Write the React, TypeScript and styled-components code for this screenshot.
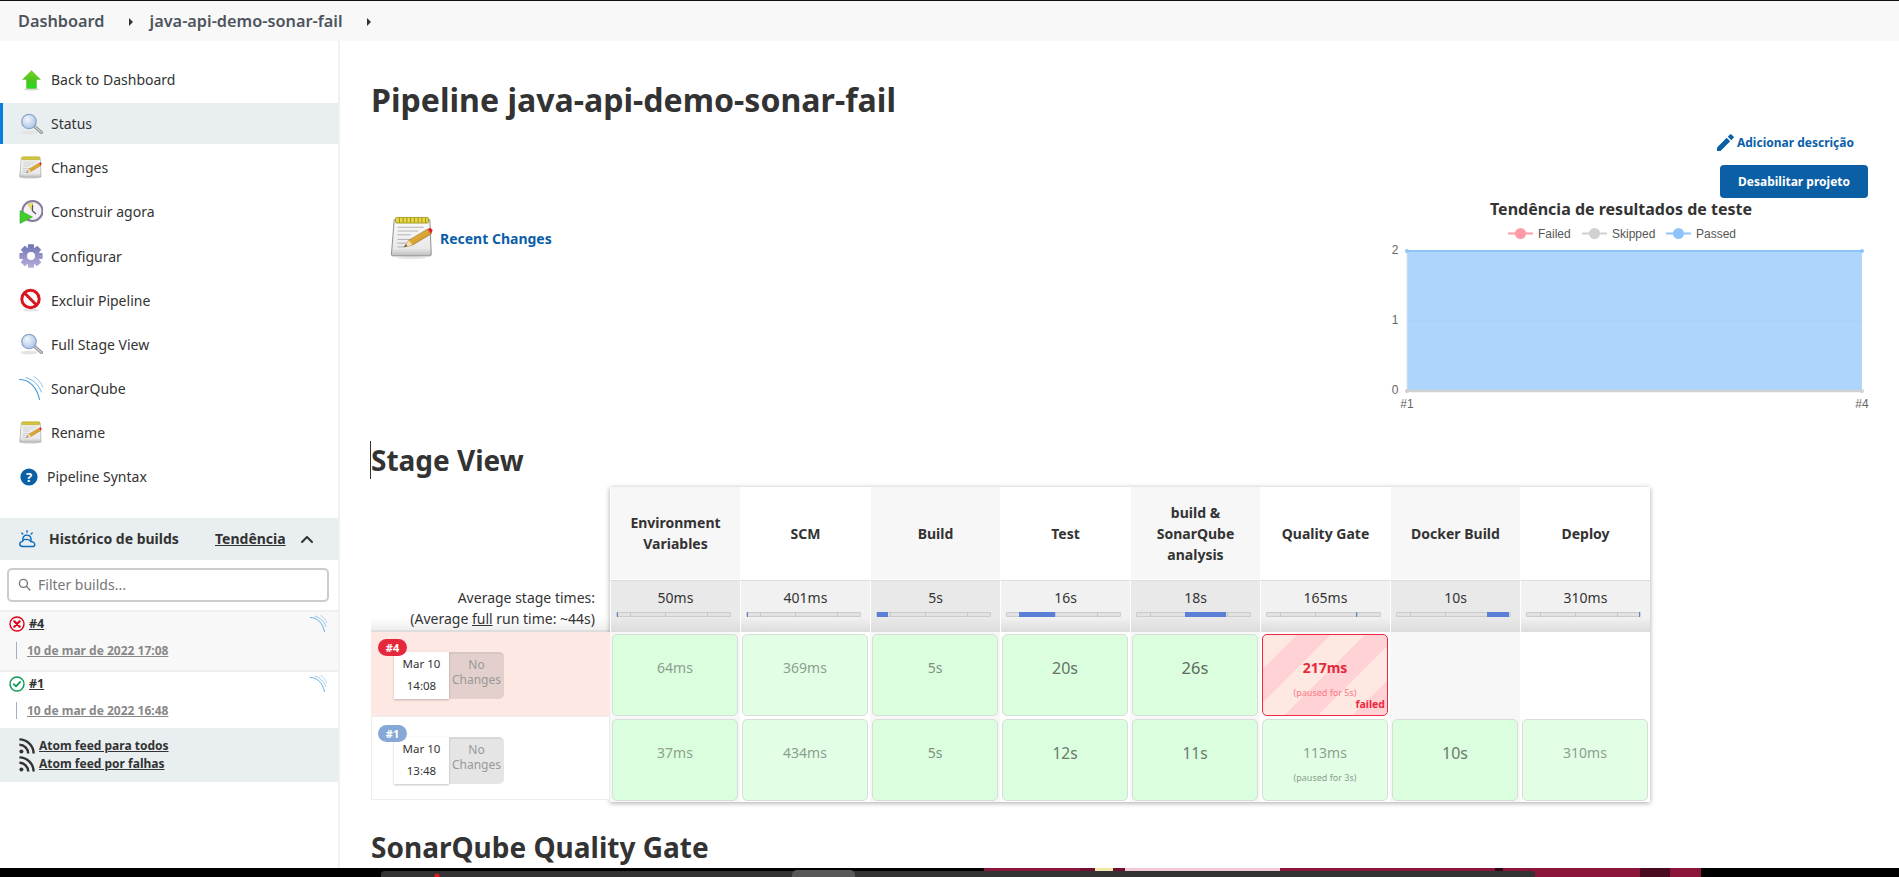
import React from "react";
import styled, { createGlobalStyle } from "styled-components";

const Global = createGlobalStyle`
  html, body { margin: 0; padding: 0; height: 100%; background: #fff; overflow: hidden; }
  body { font-family: "Noto Sans", "Liberation Sans", sans-serif; color: #333; }
  * { box-sizing: border-box; }
`;

const Page = styled.div`
  height: 877px; display: flex; flex-direction: column; overflow: hidden;
`;
const TopBar = styled.nav`
  height: 41px; flex: none; background: #f8f8f8; border-top: 1px solid #111;
  display: flex; align-items: center; padding-left: 18px;
  font-size: 16.3px; font-weight: 600; color: #4d545d; line-height: 20px;
`;
const Crumb = styled.span`white-space: nowrap;`;
const CrumbArrow = styled.span`
  width: 0; height: 0; margin: 1px 0 0 ${p => p.$gap}px;
  margin-right: ${p => p.$after}px;
  border-left: 4px solid #333; border-top: 4px solid transparent; border-bottom: 4px solid transparent;
`;
const Body = styled.div`flex: 1; min-height: 0; display: flex; overflow: hidden;`;
const Sidebar = styled.aside`
  width: 340px; flex: none; border-right: 2px solid #eef2f3; padding-top: 18px;
`;
const Tasks = styled.ul`list-style: none; margin: 0; padding: 0; display: flex; flex-direction: column; gap: 3.15px;`;
const Task = styled.li`
  height: 41px; display: flex; align-items: center; gap: ${p => p.$gap ?? 8}px;
  padding-left: ${p => p.$pad ?? 19}px; font-size: 14px; color: #333; white-space: nowrap;
  background: ${p => (p.$active ? "#e9eef1" : "transparent")};
  box-shadow: ${p => (p.$active ? "inset 3px 0 0 #0b7ddd" : "none")};
`;
const HistoryHead = styled.div`
  margin-top: 20.65px; height: 42px; background: #e9eef1; display: flex; align-items: center;
  padding-left: 19px; font-size: 14px; font-weight: 700; color: #333;
`;
const HistoryTitle = styled.span`margin-left: 13px; width: 166px; white-space: nowrap;`;
const TrendLink = styled.span`text-decoration: underline; white-space: nowrap;`;
const Collapse = styled.span`margin-left: 14px; display: flex;`;
const FilterWrap = styled.div`padding: 8px 9px 8px 7px; height: 50px;`;
const Filter = styled.div`
  height: 34px; border: 2px solid #ccc; border-radius: 5px; background: #fff;
  display: flex; align-items: center; padding-left: 9px; gap: 7px; color: #777; font-size: 14px;
`;
const BuildRow = styled.div`
  height: ${p => p.$h}px; background: ${p => p.$bg}; border-top: 2px solid #eef0f1;
  padding: 2px 11px 0 9px; display: flex; flex-direction: column;
`;
const BuildTop = styled.div`display: flex; align-items: center; gap: 4px; height: 20px;`;
const BuildNo = styled.span`font-size: 12.5px; font-weight: 700; text-decoration: underline; color: #333;`;
const SonarEnd = styled.span`margin-left: auto; display: flex;`;
const BuildDate = styled.div`
  margin: 8px 0 0 7px; padding-left: 10px; height: 17px; border-left: 1px solid #9fb0c0;
  font-size: 12px; line-height: 17px; font-weight: 700; color: #888; text-decoration: underline; white-space: nowrap;
`;
const Feeds = styled.div`
  height: 54px; background: #e9eef1; padding: 10px 0 0 19px; display: flex; flex-direction: column; gap: 2px;
`;
const Feed = styled.div`
  display: flex; align-items: center; gap: 4px; height: 16px; font-size: 12px; font-weight: 700;
  text-decoration: underline; color: #333; white-space: nowrap;
`;
const Main = styled.main`flex: 1; min-width: 0; padding: 37px 31px 0 31px; display: flex; flex-direction: column;`;
const Title = styled.h1`margin: 0; font-size: 32.1px; line-height: 44px; font-weight: 700; color: #333; white-space: nowrap;`;
const DescRow = styled.div`
  margin-top: 10px; height: 20px; padding-right: 14px; display: flex; justify-content: flex-end; align-items: center; gap: 3px;
  font-size: 12px; font-weight: 700; color: #0b5ea8;
`;
const ButtonRow = styled.div`margin-top: 13px; display: flex; justify-content: flex-end;`;
const Disable = styled.button`
  width: 148px; height: 33px; border: 0; border-radius: 4px; background: #0b5fa5; color: #fff;
  font: 700 12px "Noto Sans", sans-serif; padding: 0;
`;
const Overview = styled.section`margin-top: 2px; height: 220px; display: flex; justify-content: space-between;`;
const Recent = styled.div`
  margin: 14px 0 0 19px; height: 48px; display: flex; align-items: center; gap: 5px;
  font-size: 14px; font-weight: 700; color: #0b5ea8;
`;
const Heading = styled.h2`
  margin: 21px 0 0; font-size: 28px; line-height: 38px; font-weight: 700; color: #333; white-space: nowrap;
  span { display: inline-block; box-shadow: ${p => (p.$caret ? "-1px 0 0 0 #333" : "none")}; margin-left: 0; }
`;
const NextHeading = styled(Heading)`margin-top: 26px; flex: none;`;
const Stage = styled.section`margin-top: 8px; display: flex; flex: none;`;
const StageLeft = styled.div`width: 239px; flex: none; display: flex; flex-direction: column;`;
const LeftSpacer = styled.div`height: 93px;`;
const AvgLabel = styled.div`
  height: 52px; padding: 7px 15px 0 0; text-align: right; font-size: 14px; line-height: 21px; color: #333;
  background: linear-gradient(to bottom, #fff 0, #fff 75%, #eee 100%); border-bottom: 2px solid #ddd; white-space: nowrap;
  u { text-decoration: underline; }
`;
const RunRow = styled.div`
  position: relative; padding: 20px 0 0 ${p => (p.$failed ? 23 : 22)}px; display: flex;
  background: ${p => (p.$failed ? "#fde8e4" : "#fff")};
  border: ${p => (p.$failed ? "0" : "1px solid #eceeee")};
  margin-bottom: ${p => (p.$failed ? "0" : "2px")};
  height: 84px;
`;
const RunBadge = styled.span`
  position: absolute; left: ${p => (p.$failed ? 7 : 6)}px; top: ${p => (p.$failed ? 7 : 8)}px; width: 29px; height: 17px; border-radius: 9px;
  background: ${p => (p.$failed ? "#e6283c" : "#86a8d6")}; color: #fff; font-size: 11px; font-weight: 700;
  display: flex; align-items: center; justify-content: center;
`;
const DateTile = styled.div`
  width: 55px; height: 47px; padding-top: 1px; background: #fff; box-shadow: 0 1px 2px rgba(0,0,0,.25);
  display: flex; flex-direction: column; align-items: center; font-size: 11.5px; line-height: 22px; color: #333;
`;
const NoChanges = styled.div`
  width: 55px; height: 47px; background: rgba(0,0,0,.1); border-radius: 0 5px 5px 0; border-top: 2px solid rgba(0,0,0,.06);
  color: #999; font-size: 12px; line-height: 15px; text-align: center; padding-top: 3px;
`;
const StageTable = styled.div`
  width: 1040px; flex: none; display: grid; grid-template-columns: repeat(8, 130px);
  grid-template-rows: 93px 52px 85px 85px; box-shadow: 0 1px 5px rgba(0,0,0,.35);
`;
const HeadCell = styled.div`
  background: ${p => (p.$odd ? "#f7f7f7" : "#fff")}; border-left: 1px solid #fff; border-bottom: 1px solid #fff;
  display: flex; align-items: center; justify-content: center; text-align: center;
  font-size: 14px; font-weight: 700; line-height: 21px; padding: 0 12px; color: #333;
`;
const AvgCell = styled.div`
  background: linear-gradient(to bottom, ${p => (p.$odd ? "#e9e9e9" : "#f1f1f1")} 0, ${p => (p.$odd ? "#e9e9e9" : "#f1f1f1")} 72%, #dcdcdc 100%);
  border-left: 1px solid #fff; border-top: 1px solid #ddd; padding-top: 6px;
  display: flex; flex-direction: column; align-items: center; font-size: 14px; line-height: 21px; color: #333;
`;
const Bar = styled.div`
  position: relative; width: 115px; height: 5px; margin: 4px 5px 0 0; background: #e2e2e2; border: 1px solid #ccc; border-radius: 1px;
`;
const Tick = styled.i`position: absolute; top: -1px; bottom: -1px; width: 1px; background: #c6c6c6;`;
const Fill = styled.i`position: absolute; top: -1px; bottom: -1px; background: #5b7fd6;`;
const CellWrap = styled.div`
  background: ${p => (p.$odd ? "#f7f7f7" : "#fff")}; padding: 2px 2px 1px 2px;
`;
const TimeBox = styled.div`
  position: relative; height: 82px; border-radius: 5px; text-align: center; padding-top: ${p => p.$pt}px;
  border: 1px solid ${p => (p.$failed ? "#ee2a40" : "#d6dfd6")};
  background: ${p => (p.$failed
    ? "repeating-linear-gradient(135deg, #fde8e2 0 24px, #ffd2d6 24px 48px)"
    : p.$dense ? "#dbffde" : "#e2ffe6")};
  color: ${p => (p.$failed ? "#e6283c" : p.$tone)}; font-size: ${p => p.$size}px; line-height: 24px;
  font-weight: ${p => (p.$failed ? 700 : 400)};
`;
const Paused = styled.div`
  font-size: 9px; line-height: 12px; margin-top: 7px; font-weight: 400;
  color: ${p => (p.$failed ? "#f87a85" : "#8c9c8c")};
`;
const FailedTag = styled.span`
  position: absolute; right: 2px; bottom: 4px; font-size: 10.5px; line-height: 13px; font-weight: 700; color: #f0283c;
`;
const Strip = styled.div`height: 9px; flex: none; background: #000; overflow: hidden; display: flex;`;

const ArrowUp = () => (
  <svg width="24" height="24" viewBox="0 0 24 24">
    <defs><linearGradient id="gu" x1="0" y1="0" x2="0" y2="1"><stop offset="0" stopColor="#7ed321"/><stop offset=".55" stopColor="#4cc51e"/><stop offset="1" stopColor="#1fe01f"/></linearGradient></defs>
    <ellipse cx="12.5" cy="21.5" rx="8" ry="1.2" fill="#ddd"/>
    <path d="M12.5 2.5 21.5 11.5H17.5V20.5H7.5V11.5H3.5Z" fill="url(#gu)" stroke="#5aa81e" strokeWidth=".4"/>
  </svg>
);
const Magnifier = ({ id }: { id: string }) => (
  <svg width="24" height="24" viewBox="0 0 24 24">
    <defs><radialGradient id={id} cx=".4" cy=".35" r=".7"><stop offset="0" stopColor="#f2f6fc"/><stop offset="1" stopColor="#a9c2e8"/></radialGradient></defs>
    <ellipse cx="10" cy="20.5" rx="8.5" ry="1.8" fill="#e3e3e3"/>
    <path d="M15.5 14.5 22.5 20.5" stroke="#8f8f8f" strokeWidth="3" strokeLinecap="round"/>
    <path d="M15.5 14.5 22.5 20.5" stroke="#cfcfcf" strokeWidth="1.2" strokeLinecap="round"/>
    <circle cx="10" cy="9.5" r="7.2" fill={`url(#${id})`} stroke="#8fa6c8" strokeWidth="1.3"/>
  </svg>
);
const Notepad = ({ id, size }: { id: string; size: number }) => (
  <svg width={size} height={size} viewBox="0 0 48 48">
    <defs>
      <linearGradient id={id} x1="0" y1="0" x2="0" y2="1"><stop offset="0" stopColor="#fafafa"/><stop offset=".8" stopColor="#e8e8e8"/><stop offset="1" stopColor="#bdbdbd"/></linearGradient>
      <linearGradient id={id + "p"} x1="0" y1="0" x2="1" y2="1"><stop offset="0" stopColor="#f2c14e"/><stop offset="1" stopColor="#c98a1b"/></linearGradient>
    </defs>
    <ellipse cx="23" cy="44.5" rx="16" ry="1.6" fill="#e6e6e6"/>
    <path d="M4.5 4H42.5L44 41a1.5 1.5 0 0 1-1.5 1.5H3A1.5 1.5 0 0 1 1.5 41Z" fill={`url(#${id})`} stroke="#8a8a8a" strokeWidth="1"/>
    <rect x="6" y="1.5" width="35" height="6" rx="1" fill="#e8d94a" stroke="#8e8400" strokeWidth=".8"/>
    <path d="M10 2v5M14 2v5M18 2v5M22 2v5M26 2v5M30 2v5M34 2v5M38 2v5" stroke="#8e8400" strokeWidth=".9"/>
    <path d="M8 12H36M8 16H30M8 20H22M8 25H28M8 29H24M8 33H16" stroke="#a8a8a8" strokeWidth=".9"/>
    <path d="M15 33 20 26 40 14 44 19 24 31Z" fill={`url(#${id}p)`} stroke="#8a6210" strokeWidth=".6"/>
    <path d="M15 33 20 26 24 31Z" fill="#f5deb0"/>
    <path d="M15 33 17 30.5 18.5 32Z" fill="#333"/>
    <path d="M40 14 43 12.5 45.5 15 44 19Z" fill="#e0202c"/>
  </svg>
);
const BuildNow = () => (
  <svg width="24" height="24" viewBox="0 0 24 24">
    <circle cx="13.5" cy="11" r="10" fill="#f4f2f6" stroke="#857a99" strokeWidth="2"/>
    <path d="M13.5 11 9 4.5A8 8 0 0 1 13.5 3Z" fill="#f3e56b" stroke="#b5a52c" strokeWidth=".5"/>
    <path d="M13.5 11V5M13.5 11 17 14" stroke="#555" strokeWidth="1.2"/>
    <path d="M1 10.5 13.5 17 1 23.5Z" fill="#3fce2a" stroke="#2e9a1e" strokeWidth=".5"/>
  </svg>
);
const gearPath = (() => {
  const pts: string[] = [];
  for (let i = 0; i < 8; i++) {
    const a = (i * Math.PI) / 4 - Math.PI / 2;
    const w = 0.24;
    const p = (r: number, t: number) => `${(12 + r * Math.cos(t)).toFixed(2)} ${(12 + r * Math.sin(t)).toFixed(2)}`;
    pts.push(`${i === 0 ? "M" : "L"}${p(8.6, a - 0.38)}L${p(12, a - w)}L${p(12, a + w)}L${p(8.6, a + 0.38)}`);
  }
  return pts.join("") + "Z";
})();
const Gear = () => (
  <svg width="24" height="24" viewBox="0 0 24 24">
    <defs><linearGradient id="gg" x1="0" y1="0" x2="0" y2="1"><stop offset="0" stopColor="#6f74b4"/><stop offset="1" stopColor="#b7aed8"/></linearGradient></defs>
    <path d={gearPath} fill="url(#gg)"/>
    <circle cx="12" cy="12" r="4" fill="#fff"/>
  </svg>
);
const NoSign = () => (
  <svg width="24" height="24" viewBox="0 0 24 24">
    <ellipse cx="12" cy="22" rx="8" ry="1.4" fill="#e4e4e4"/>
    <circle cx="11.5" cy="11" r="8.7" fill="#fff" stroke="#d8161d" strokeWidth="3"/>
    <path d="M5.5 5 17.5 17" stroke="#d8161d" strokeWidth="3"/>
  </svg>
);
const Sonar = ({ size = 24 }: { size?: number }) => (
  <svg width={size} height={size} viewBox="0 0 24 24" fill="none" stroke="#4e9fd8" strokeLinecap="round">
    <path d="M.5 3.5C10 3.5 18 11 20.5 23.5" strokeWidth="1.2"/>
    <path d="M7 1.5C14 3.5 20 9 22.3 16" strokeWidth=".8"/>
    <path d="M15 .6C19 3 22.5 7 23.8 11" strokeWidth=".6"/>
  </svg>
);
const Help = () => (
  <svg width="20" height="20" viewBox="0 0 20 20">
    <circle cx="10" cy="10" r="8.6" fill="#0b5fa5"/>
    <text x="10" y="14.6" textAnchor="middle" fontFamily="Noto Sans" fontWeight="700" fontSize="13" fill="#fff">?</text>
  </svg>
);
const Weather = () => (
  <svg width="17" height="18" viewBox="0 0 17 18" fill="none" stroke="#0b6cb8" strokeWidth="1.4" strokeLinecap="round" strokeLinejoin="round">
    <path d="M4 16.5C1.8 16.5.8 15.3.8 14s1-2.4 2.6-2.4C4 9.8 5.4 9 7 9.6c1.2-.5 3.8-.3 4.6 2 1.8-.2 4.2 1 4.2 2.8 0 1.2-1 2.1-2.4 2.1Z"/>
    <path d="M4 10.2A4 4 0 0 1 8.2 5a4 4 0 0 1 3.6 5.4"/>
    <path d="M8 .8V2.2M2.8 3 3.8 4M13.2 3 12.2 4"/>
  </svg>
);
const Chevron = () => (
  <svg width="14" height="10" viewBox="0 0 14 10" fill="none" stroke="#333" strokeWidth="2" strokeLinecap="round" strokeLinejoin="round"><path d="M2 8 7 3 12 8"/></svg>
);
const Search = () => (
  <svg width="13" height="13" viewBox="0 0 13 13" fill="none" stroke="#777" strokeWidth="1.4" strokeLinecap="round"><circle cx="5.4" cy="5.4" r="4"/><path d="M8.5 8.5 12 12"/></svg>
);
const Status = ({ ok }: { ok: boolean }) => (
  <svg width="16" height="16" viewBox="0 0 16 16" fill="none" stroke={ok ? "#0b9a55" : "#e3001b"}>
    <circle cx="8" cy="8" r="7" strokeWidth="1.4"/>
    {ok
      ? <path d="M4.8 8.2 7 10.3 11.2 5.9" strokeWidth="1.8" strokeLinecap="round" strokeLinejoin="round"/>
      : <path d="M5.3 5.3 10.7 10.7M10.7 5.3 5.3 10.7" strokeWidth="2.2" strokeLinecap="round"/>}
  </svg>
);
const Rss = () => (
  <svg width="16" height="16" viewBox="0 0 16 16" fill="none" stroke="#333" strokeWidth="2.4">
    <circle cx="2.4" cy="13.4" r="2" fill="#333" stroke="none"/>
    <path d="M.4 6.8A8.8 8.8 0 0 1 9.2 15.6"/>
    <path d="M.4 1.4A14.2 14.2 0 0 1 14.6 15.6"/>
  </svg>
);
const Pencil = () => (
  <svg width="17" height="17" viewBox="0 0 17 17" fill="#0b5ea8">
    <path d="M0 13.5V17H3.5L13.2 7.3 9.7 3.8Z"/><path d="M10.8 2.7 14.3 6.2 16.5 4a1 1 0 0 0 0-1.4L14.4.5a1 1 0 0 0-1.4 0Z"/>
  </svg>
);

const Chart = () => {
  const lab = { fontFamily: "Liberation Sans", fontSize: 12, fill: "#666" };
  const leg = { fontFamily: "Liberation Sans", fontSize: 12, fill: "#555" };
  const legend = [
    { x: 130, c: "#ff9aa6", t: "Failed" },
    { x: 204, c: "#d0d0d0", t: "Skipped" },
    { x: 288, c: "#8fc4fb", t: "Passed" },
  ];
  return (
    <svg width="490" height="220" viewBox="0 0 490 220" style={{ overflow: "visible" }}>
      <text x="243" y="14.5" textAnchor="middle" fontFamily="Noto Sans" fontWeight="700" fontSize="16" fill="#333">Tendência de resultados de teste</text>
      {legend.map(l => (
        <g key={l.t}>
          <line x1={l.x} x2={l.x + 25} y1="33.5" y2="33.5" stroke={l.c} strokeWidth="2"/>
          <circle cx={l.x + 12.5} cy="33.5" r="5.5" fill={l.c}/>
          <text x={l.x + 30} y="37.5" {...leg}>{l.t}</text>
        </g>
      ))}
      <rect x="29" y="51" width="455" height="140" fill="#aed5fb"/>
      <line x1="29" x2="484" y1="121" y2="121" stroke="#a8d1f8" strokeWidth="1"/>
      <line x1="29" x2="29" y1="51" y2="191" stroke="#d6e6f6" strokeWidth="1"/>
      <line x1="29" x2="484" y1="51" y2="51" stroke="#8fc4fb" strokeWidth="2"/>
      <line x1="29" x2="484" y1="191" y2="191" stroke="#d2d2d2" strokeWidth="2.5"/>
      <circle cx="29" cy="51" r="2" fill="#8fc4fb"/><circle cx="484" cy="51" r="2" fill="#8fc4fb"/>
      <circle cx="29" cy="191" r="2" fill="#d8c8cc"/><circle cx="484" cy="191" r="2" fill="#d2d2d2"/>
      <text x="17" y="54" textAnchor="middle" {...lab}>2</text>
      <text x="17" y="124" textAnchor="middle" {...lab}>1</text>
      <text x="17" y="194" textAnchor="middle" {...lab}>0</text>
      <text x="29" y="208" textAnchor="middle" {...lab}>#1</text>
      <text x="484" y="208" textAnchor="middle" {...lab}>#4</text>
    </svg>
  );
};

const stages = [
  { h: ["Environment", "Variables"], avg: "50ms", from: 0, to: 0.006 },
  { h: ["SCM"], avg: "401ms", from: 0, to: 0.01 },
  { h: ["Build"], avg: "5s", from: 0, to: 0.1 },
  { h: ["Test"], avg: "16s", from: 0.115, to: 0.425 },
  { h: ["build &", "SonarQube", "analysis"], avg: "18s", from: 0.425, to: 0.79 },
  { h: ["Quality Gate"], avg: "165ms", from: 0.79, to: 0.797 },
  { h: ["Docker Build"], avg: "10s", from: 0.8, to: 1 },
  { h: ["Deploy"], avg: "310ms", from: 0.993, to: 1 },
];
type Cell = { t: string; size: number; tone: string; dense?: boolean; paused?: string; failed?: boolean } | null;
const runs: { id: string; failed: boolean; time: string; cells: Cell[] }[] = [
  { id: "#4", failed: true, time: "14:08", cells: [
    { t: "64ms", size: 14, tone: "#8d9e8f", dense: true },
    { t: "369ms", size: 14, tone: "#8d9e8f" },
    { t: "5s", size: 14, tone: "#7f8f81", dense: true },
    { t: "20s", size: 16, tone: "#667268", dense: true },
    { t: "26s", size: 16.5, tone: "#5e6a60", dense: true },
    { t: "217ms", size: 14, tone: "", failed: true, paused: "(paused for 5s)" },
    null, null,
  ]},
  { id: "#1", failed: false, time: "13:48", cells: [
    { t: "37ms", size: 14, tone: "#8d9e8f", dense: true },
    { t: "434ms", size: 14, tone: "#8d9e8f" },
    { t: "5s", size: 14, tone: "#7f8f81", dense: true },
    { t: "12s", size: 15.5, tone: "#6c786e", dense: true },
    { t: "11s", size: 15.5, tone: "#6c786e", dense: true },
    { t: "113ms", size: 14, tone: "#8d9e8f", paused: "(paused for 3s)" },
    { t: "10s", size: 16, tone: "#6c786e", dense: true },
    { t: "310ms", size: 14, tone: "#8d9e8f" },
  ]},
];

export default function App() {
  return (
    <Page>
      <Global />
      <TopBar>
        <Crumb>Dashboard</Crumb>
        <CrumbArrow $gap={24} $after={17} />
        <Crumb>java-api-demo-sonar-fail</Crumb>
        <CrumbArrow $gap={24} $after={0} />
      </TopBar>
      <Body>
        <Sidebar>
          <Tasks>
            <Task><ArrowUp />Back to Dashboard</Task>
            <Task $active><Magnifier id="m1" />Status</Task>
            <Task><Notepad id="n1" size={24} />Changes</Task>
            <Task><BuildNow />Construir agora</Task>
            <Task><Gear />Configurar</Task>
            <Task><NoSign />Excluir Pipeline</Task>
            <Task><Magnifier id="m2" />Full Stage View</Task>
            <Task><Sonar />SonarQube</Task>
            <Task><Notepad id="n2" size={24} />Rename</Task>
            <Task $pad={19} $gap={8}><Help />Pipeline Syntax</Task>
          </Tasks>
          <HistoryHead>
            <Weather />
            <HistoryTitle>Histórico de builds</HistoryTitle>
            <TrendLink>Tendência</TrendLink>
            <Collapse><Chevron /></Collapse>
          </HistoryHead>
          <FilterWrap><Filter><Search />Filter builds...</Filter></FilterWrap>
          <BuildRow $h={60} $bg="#f8f8f8">
            <BuildTop><Status ok={false} /><BuildNo>#4</BuildNo><SonarEnd><Sonar size={17} /></SonarEnd></BuildTop>
            <BuildDate>10 de mar de 2022 17:08</BuildDate>
          </BuildRow>
          <BuildRow $h={58} $bg="#fff">
            <BuildTop><Status ok /><BuildNo>#1</BuildNo><SonarEnd><Sonar size={17} /></SonarEnd></BuildTop>
            <BuildDate>10 de mar de 2022 16:48</BuildDate>
          </BuildRow>
          <Feeds>
            <Feed><Rss />Atom feed para todos</Feed>
            <Feed><Rss />Atom feed por falhas</Feed>
          </Feeds>
        </Sidebar>
        <Main>
          <Title>Pipeline java-api-demo-sonar-fail</Title>
          <DescRow><Pencil />Adicionar descrição</DescRow>
          <ButtonRow><Disable>Desabilitar projeto</Disable></ButtonRow>
          <Overview>
            <Recent><Notepad id="n3" size={45} />Recent Changes</Recent>
            <Chart />
          </Overview>
          <Heading $caret><span>Stage View</span></Heading>
          <Stage>
            <StageLeft>
              <LeftSpacer />
              <AvgLabel>Average stage times:<br />(Average <u>full</u> run time: ~44s)</AvgLabel>
              {runs.map(r => (
                <RunRow key={r.id} $failed={r.failed}>
                  <RunBadge $failed={r.failed}>{r.id}</RunBadge>
                  <DateTile><span>Mar 10</span><span>{r.time}</span></DateTile>
                  <NoChanges>No<br />Changes</NoChanges>
                </RunRow>
              ))}
            </StageLeft>
            <StageTable>
              {stages.map((s, i) => (
                <HeadCell key={i} $odd={i % 2 === 0}>
                  <span>{s.h.map((l, k) => <React.Fragment key={k}>{k > 0 && <br />}{l}</React.Fragment>)}</span>
                </HeadCell>
              ))}
              {stages.map((s, i) => (
                <AvgCell key={i} $odd={i % 2 === 0}>
                  {s.avg}
                  <Bar>
                    {[0.116, 0.427, 0.8].map(t => <Tick key={t} style={{ left: `${t * 100}%` }} />)}
                    <Fill style={{ left: `${s.from * 100}%`, width: `${Math.max((s.to - s.from) * 100, 1)}%` }} />
                  </Bar>
                </AvgCell>
              ))}
              {runs.map(r => r.cells.map((c, i) => (
                <CellWrap key={r.id + i} $odd={i % 2 === 0}>
                  {c && (
                    <TimeBox $pt={21} $size={c.size} $tone={c.tone} $dense={c.dense} $failed={c.failed}>
                      {c.t}
                      {c.paused && <Paused $failed={c.failed}>{c.paused}</Paused>}
                      {c.failed && <FailedTag>failed</FailedTag>}
                    </TimeBox>
                  )}
                </CellWrap>
              )))}
            </StageTable>
          </Stage>
          <NextHeading><span>SonarQube Quality Gate</span></NextHeading>
        </Main>
      </Body>
      <Strip>
        <svg width="1899" height="9" viewBox="0 0 1899 9">
          <rect x="984" y="0" width="717" height="9" fill="#8a1538"/>
          <rect x="1080" y="0" width="45" height="9" fill="#6e1030"/>
          <rect x="1095" y="0" width="18" height="9" fill="#efe6a8"/>
          <rect x="1125" y="0" width="155" height="9" fill="#f2c8d8"/>
          <rect x="1495" y="0" width="8" height="9" fill="#2a0512"/>
          <rect x="1640" y="0" width="30" height="9" fill="#4a0a20"/>
          <path d="M381 9V7a4 4 0 0 1 4-4H1531a4 4 0 0 1 4 4v2Z" fill="#333"/>
          <path d="M792 9V7a5 5 0 0 1 5-5H850a5 5 0 0 1 5 5v2Z" fill="#585858"/>
          <circle cx="437" cy="8" r="2.5" fill="#e8141c"/>
        </svg>
      </Strip>
    </Page>
  );
}
